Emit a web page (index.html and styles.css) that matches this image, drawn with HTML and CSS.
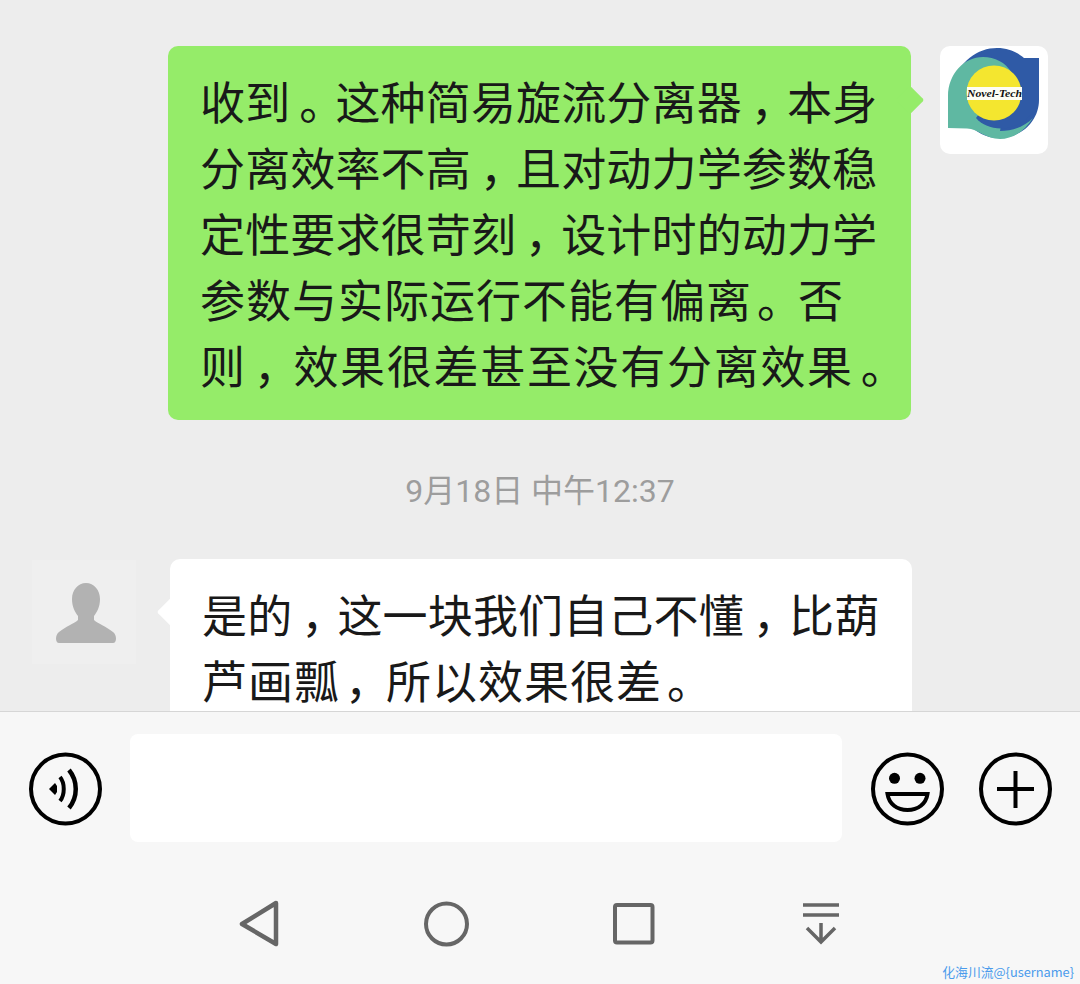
FILE: index.html
```html
<!DOCTYPE html>
<html lang="zh-CN">
<head>
<meta charset="utf-8">
<title>Chat</title>
<link rel="stylesheet" href="styles.css">
</head>
<body>
<div class="screen">
  <main class="chat">
    <div class="row row-me">
      <div class="bubble bubble-me">
        <p class="msg">
          <span class="line">收到<span class="p">。</span>这种简易旋流分离器<span class="p">，</span>本身</span>
          <span class="line">分离效率不高<span class="p">，</span>且对动力学参数稳</span>
          <span class="line">定性要求很苛刻<span class="p">，</span>设计时的动力学</span>
          <span class="line line-wide">参数与实际运行不能有偏离<span class="p">。</span>否</span>
          <span class="line line-wider">则<span class="p">，</span>效果很差甚至没有分离效果<span class="p">。</span></span>
        </p>
      </div>
      <div class="avatar avatar-logo">
        <svg class="logo" viewBox="0 0 108 108" width="108" height="108">
          <path d="M13 40 C18 15 38 2 57 2 C70 2 78 7 84 12 L99 12 L99 54 C99 76 80 92 60 92 C40 92 20 80 13 40 Z" fill="#2f5aa6"/>
          <path d="M8 82 L8 50 C8 28 24 11 43 11 C55 11 65 16 72 27 L60 85 C72 85 84 81 93 72 C84 86 72 93 60 93 C46 93 38 83 27 82.5 Z" fill="#5fb8a2"/>
          <path d="M36 72 C46 84 74 90 93 66 L93 40 L60 40 Z" fill="#2f5aa6"/>
          <circle cx="54" cy="47" r="27.5" fill="#f4e62f"/>
          <rect x="27" y="41" width="55" height="13" fill="#fdfdf4"/>
          <text class="logo-text" x="27" y="51" textLength="55" lengthAdjust="spacingAndGlyphs">Novel-Tech</text>
        </svg>
      </div>
    </div>
    <div class="time">9月18日 中午12:37</div>
    <div class="row row-other">
      <div class="avatar avatar-default">
        <svg viewBox="0 0 104 104" width="104" height="104">
          <path d="M54 23 C62 23 68 30 68 39 C68 47 65 52 62 56 L62 60 C65 63 75 67 81 72 C85 75 85 83 81 83 L27 83 C23 83 23 75 27 72 C33 67 43 63 46 60 L46 56 C43 52 40 47 40 39 C40 30 46 23 54 23 Z" fill="#b2b2b2"/>
        </svg>
      </div>
      <div class="bubble bubble-other">
        <p class="msg">
          <span class="line">是的<span class="p">，</span>这一块我们自己不懂<span class="p">，</span>比葫</span>
          <span class="line line-wide">芦画瓢<span class="p">，</span>所以效果很差<span class="p">。</span></span>
        </p>
      </div>
    </div>
  </main>
  <section class="bottom">
    <div class="inputbar">
      <svg class="icon" viewBox="0 0 76 76" width="76" height="76">
        <circle cx="37.5" cy="38" r="34.5" fill="none" stroke="#000" stroke-width="4"/>
        <path d="M21 38 L27 32 L29 35 L29 41 L27 44 Z" fill="#000"/>
        <path d="M32 26 C37 32 37 44 32 50" fill="none" stroke="#000" stroke-width="4"/>
        <path d="M41 19 C50 30 50 46 41 57" fill="none" stroke="#000" stroke-width="4.5"/>
      </svg>
      <div class="field"></div>
      <svg class="icon icon-smile" viewBox="0 0 76 76" width="76" height="76">
        <circle cx="37.5" cy="38" r="34.5" fill="none" stroke="#000" stroke-width="4"/>
        <circle cx="24.5" cy="27.3" r="5.5" fill="#000"/>
        <circle cx="50" cy="27.3" r="5.5" fill="#000"/>
        <path d="M17.5 43 L57.5 43 C56 53 48 59 37.5 59 C27 59 19 53 17.5 43 Z" fill="none" stroke="#000" stroke-width="4"/>
      </svg>
      <svg class="icon icon-plus" viewBox="0 0 76 76" width="76" height="76">
        <circle cx="37.5" cy="38" r="34.5" fill="none" stroke="#000" stroke-width="4"/>
        <path d="M19 38 H56 M37.5 20 V57" fill="none" stroke="#000" stroke-width="4"/>
      </svg>
    </div>
    <nav class="navbar">
      <span class="navitem">
        <svg viewBox="0 0 44 48" width="44" height="48">
          <path d="M38 3 L4 24 L38 44 Z" fill="none" stroke="#666" stroke-width="4.5" stroke-linejoin="round"/>
        </svg>
      </span>
      <span class="navitem">
        <svg viewBox="0 0 48 48" width="48" height="48">
          <circle cx="23.5" cy="24" r="20.5" fill="none" stroke="#666" stroke-width="4"/>
        </svg>
      </span>
      <span class="navitem">
        <svg viewBox="0 0 44 44" width="44" height="44">
          <rect x="3" y="3" width="37.5" height="37.5" rx="2" fill="none" stroke="#666" stroke-width="4"/>
        </svg>
      </span>
      <span class="navitem">
        <svg viewBox="0 0 40 44" width="40" height="44">
          <path d="M2 3 H38 M2 13 H38 M20 21 V40 M6 26 L20 40 L34 26" fill="none" stroke="#666" stroke-width="3.5"/>
        </svg>
      </span>
    </nav>
    <div class="watermark">化海川流@{username}</div>
  </section>
</div>
</body>
</html>
```

FILE: styles.css
```css
* { box-sizing: border-box; }
html, body { margin: 0; padding: 0; }
body { width: 1080px; height: 984px; overflow: hidden; background: #ededed; font-family: "Noto Sans CJK SC", "Noto Sans", sans-serif; }
.screen { width: 1080px; height: 984px; display: flex; flex-direction: column; }
.chat { height: 711px; overflow: hidden; padding-top: 46px; flex: none; }
.row { display: flex; align-items: flex-start; }
.row-me { justify-content: flex-end; padding-right: 32px; gap: 29px; }
.row-other { padding-left: 32px; gap: 34px; }
.bubble { position: relative; border-radius: 10px; padding: 22px 0 0 32px; flex: none; }
.bubble::after { content: ""; position: absolute; width: 20px; height: 20px; transform: rotate(45deg); border-radius: 2px; }
.bubble-me { background: #95ec69; width: 743px; height: 374px; }
.bubble-me::after { top: 44px; right: -9px; background: #95ec69; }
.bubble-other { background: #fff; width: 742px; height: 300px; }
.bubble-other::after { top: 43px; left: -9px; background: #fff; }
.msg { margin: 0; font-size: 45px; line-height: 66px; color: #191919; white-space: nowrap; }
.line { display: block; letter-spacing: 0.15px; }
.line-wide { letter-spacing: 1px; }
.line-wider { letter-spacing: 1.7px; }
.p { margin-left: 9px; letter-spacing: -8.85px; }
.line-wide .p { margin-left: 5px; letter-spacing: -4px; }
.line-wider .p { margin-left: 7px; letter-spacing: -5.3px; }
.avatar { border-radius: 10px; flex: none; }
.avatar-logo { width: 108px; height: 108px; background: #fff; }
.avatar-default { width: 104px; height: 104px; margin-top: 1px; background: #efefef; border-radius: 0; }
.avatar svg { display: block; }
.logo-text { font-family: "Liberation Serif", serif; font-style: italic; font-weight: 700; font-size: 11px; fill: #111; }
.time { margin: 48px 0 45px; height: 46px; line-height: 46px; text-align: center; font-size: 32px; color: #9d9d9d; font-family: Roboto, "Noto Sans CJK SC", sans-serif; }
.bottom { position: relative; flex: 1; background: #f7f7f7; border-top: 1px solid #d6d6d6; }
.inputbar { display: flex; align-items: center; height: 154px; padding-left: 28px; }
.field { width: 712px; height: 108px; background: #fff; border-radius: 8px; margin: 0 0 2px 26px; flex: none; }
.icon { display: block; flex: none; }
.icon-smile { margin-left: 28px; }
.icon-plus { margin-left: 32px; }
.navbar { display: grid; grid-template-columns: repeat(4, 187px); height: 100px; margin-top: 8px; padding-left: 166px; }
.navitem { display: flex; align-items: center; justify-content: center; }
.navitem svg { display: block; }
.watermark { position: absolute; right: 6px; bottom: 3px; font-size: 12.8px; line-height: 18px; color: #4a9bec; }
```
